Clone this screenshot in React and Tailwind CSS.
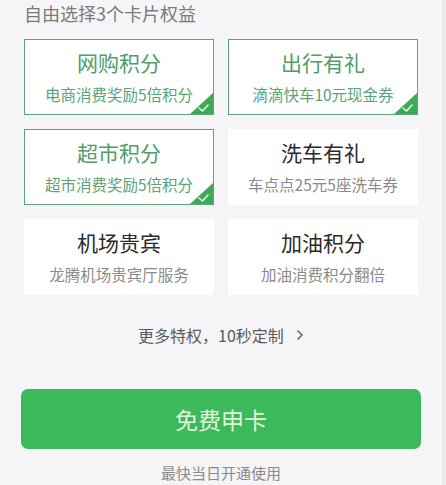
import React from 'react';

const cards = [
  { id: 'shop', title: '网购积分', desc: '电商消费奖励5倍积分', selected: true },
  { id: 'travel', title: '出行有礼', desc: '滴滴快车10元现金券', selected: true },
  { id: 'market', title: '超市积分', desc: '超市消费奖励5倍积分', selected: true },
  { id: 'wash', title: '洗车有礼', desc: '车点点25元5座洗车券', selected: false },
  { id: 'airport', title: '机场贵宾', desc: '龙腾机场贵宾厅服务', selected: false },
  { id: 'fuel', title: '加油积分', desc: '加油消费积分翻倍', selected: false },
];

const font = { fontFamily: '"Noto Sans CJK SC", "Noto Sans", sans-serif' };

const Card = ({ title, desc, selected }) => (
  <div
    className={`relative h-[76px] flex flex-col items-center overflow-hidden bg-white border-[1.5px] ${
      selected ? 'border-[#5ea678]' : 'border-white'
    }`}
  >
    <div
      className={`mt-[8px] text-[21px] leading-[28px] ${
        selected ? 'text-[#4f9d6b]' : 'text-[#2a2a2a]'
      }`}
    >
      {title}
    </div>
    <div
      className={`mt-[7px] text-[15.5px] leading-[22px] ${
        selected ? 'text-[#5aa375]' : 'text-[#8a8a8a]'
      }`}
    >
      {desc}
    </div>
    {selected && (
      <svg className="absolute right-0 bottom-0" width="23" height="21" viewBox="0 0 23 21">
        <polygon points="23,0 23,21 0,21" fill="#3daa55" />
        <path d="M9 15 L12.5 18 L18 12" fill="none" stroke="#e8f7ea" strokeWidth="1.6" strokeLinecap="round" strokeLinejoin="round" />
      </svg>
    )}
  </div>
);

export default function App() {
  return (
    <div className="w-[446px] h-[485px] bg-[#f5f5f7] overflow-hidden border-r-4 border-[#ececef]" style={font}>
      <div className="px-[24px]">
        <div className="pt-[2px] h-[39px] text-[18px] leading-[22px] text-[#7a7a7a]">
          自由选择3个卡片权益
        </div>

        <div className="grid grid-cols-2 gap-x-[14px] gap-y-[14px]">
          {cards.map(card => (
            <Card key={card.id} {...card} />
          ))}
        </div>

        <div className="mt-[29px] flex items-center justify-center gap-[12px] text-[16px] leading-[22px] text-[#5a5a5a]">
          <span>更多特权，10秒定制</span>
          <svg width="8" height="12" viewBox="0 0 8 12">
            <path d="M1.5 1.5 L6 6 L1.5 10.5" fill="none" stroke="#666" strokeWidth="1.5" />
          </svg>
        </div>
      </div>

      <div className="px-[21px] mt-[43px]">
        <button className="w-full h-[60px] rounded-[7px] bg-[#3cb95a] text-[23px] text-[#e0f6dc] flex items-center justify-center">
          免费申卡
        </button>
      </div>

      <div className="mt-[14px] text-center text-[15px] leading-[20px] text-[#8a8a8a]">
        最快当日开通使用
      </div>
    </div>
  );
}
